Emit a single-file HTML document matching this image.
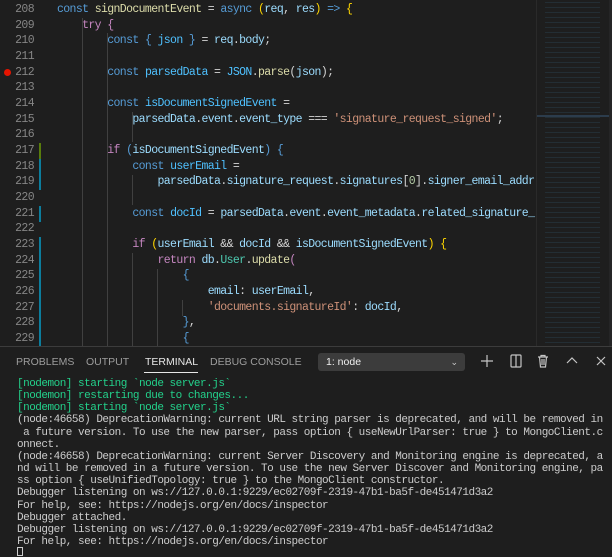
<!DOCTYPE html>
<html><head><style>
body{margin:0;width:612px;height:556px;background:#1e1e1e;overflow:hidden;position:relative;font-family:"Liberation Mono",monospace}
.ln{position:absolute;left:0;width:34px;text-align:right;color:#858585;font-size:11.5px;letter-spacing:-0.6px;line-height:15.67px}
.cd{position:absolute;left:57px;color:#d4d4d4;font-size:11.5px;letter-spacing:-0.62px;line-height:15.67px;white-space:pre;width:479px;overflow:hidden}
.k{color:#569cd6}.c{color:#4fc1ff}.v{color:#9cdcfe}.f{color:#dcdcaa}.p{color:#c586c0}.s{color:#ce9178}.y{color:#ffd700}.t{color:#4ec9b0}
.g{position:absolute;width:1px;background:#404040}
.bar{position:absolute;left:39px;width:2px}
.term{position:absolute;left:17px;top:378px;font-size:11px;letter-spacing:-0.5px;line-height:12.15px;color:#cccccc;white-space:pre}
.gr{color:#23d18b}
.tab{position:absolute;top:356px;font-family:"Liberation Sans",sans-serif;font-size:10.5px;color:#9d9d9d}
</style></head><body>
<div class="g" style="left:82px;top:18px;height:330px"></div>
<div class="g" style="left:107px;top:33px;height:315px"></div>
<div class="g" style="left:132px;top:112px;height:30px"></div>
<div class="g" style="left:132px;top:175px;height:30px"></div>
<div class="g" style="left:132px;top:253px;height:95px"></div>
<div class="g" style="left:157px;top:269px;height:79px"></div>
<div class="g" style="left:182px;top:300px;height:16px"></div>
<div class="bar" style="top:143px;height:16px;background:#587c0c"></div>
<div class="bar" style="top:159px;height:31px;background:#0c7d9d"></div>
<div class="bar" style="top:206px;height:16px;background:#0c7d9d"></div>
<div class="bar" style="top:237px;height:110px;background:#0c7d9d"></div>
<div style="position:absolute;left:4px;top:69px;width:7px;height:7px;border-radius:50%;background:#e51400"></div>
<div style="position:absolute;left:536px;top:0;width:1px;height:347px;background:#2a2a2a"></div>
<div style="position:absolute;left:545px;top:0;width:55px;height:347px;opacity:.35;background:repeating-linear-gradient(#1e1e1e 0 2px,#2d4a5c 2px 3px,#1e1e1e 3px 5px)"></div>
<div style="position:absolute;left:537px;top:115px;width:73px;height:2px;background:#2c3c4c"></div>
<div style="position:absolute;left:609px;top:0;width:3px;height:347px;background:#252526"></div>

<div class="ln" style="top:2px">208</div><div class="cd" style="top:2px"><span class="k">const</span> <span class="f">signDocumentEvent</span> = <span class="k">async</span> <span class="y">(</span><span class="v">req</span>, <span class="v">res</span><span class="y">)</span> <span class="k">=&gt;</span> <span class="y">{</span></div>
<div class="ln" style="top:17.7px">209</div><div class="cd" style="top:17.7px">    <span class="p">try</span> <span class="p">{</span></div>
<div class="ln" style="top:33.3px">210</div><div class="cd" style="top:33.3px">        <span class="k">const</span> <span class="k">{</span> <span class="c">json</span> <span class="k">}</span> = <span class="v">req</span>.<span class="v">body</span>;</div>
<div class="ln" style="top:49px">211</div>
<div class="ln" style="top:64.7px">212</div><div class="cd" style="top:64.7px">        <span class="k">const</span> <span class="c">parsedData</span> = <span class="c">JSON</span>.<span class="f">parse</span>(<span class="v">json</span>);</div>
<div class="ln" style="top:80.3px">213</div>
<div class="ln" style="top:96px">214</div><div class="cd" style="top:96px">        <span class="k">const</span> <span class="c">isDocumentSignedEvent</span> =</div>
<div class="ln" style="top:111.7px">215</div><div class="cd" style="top:111.7px">            <span class="v">parsedData</span>.<span class="v">event</span>.<span class="v">event_type</span> === <span class="s">'signature_request_signed'</span>;</div>
<div class="ln" style="top:127.4px">216</div>
<div class="ln" style="top:143px">217</div><div class="cd" style="top:143px">        <span class="p">if</span> <span class="k">(</span><span class="v">isDocumentSignedEvent</span><span class="k">)</span> <span class="k">{</span></div>
<div class="ln" style="top:158.7px">218</div><div class="cd" style="top:158.7px">            <span class="k">const</span> <span class="c">userEmail</span> =</div>
<div class="ln" style="top:174.4px">219</div><div class="cd" style="top:174.4px">                <span class="v">parsedData</span>.<span class="v">signature_request</span>.<span class="v">signatures</span>[<span style="color:#b5cea8">0</span>].<span class="v">signer_email_addr</span></div>
<div class="ln" style="top:190px">220</div>
<div class="ln" style="top:205.7px">221</div><div class="cd" style="top:205.7px">            <span class="k">const</span> <span class="c">docId</span> = <span class="v">parsedData</span>.<span class="v">event</span>.<span class="v">event_metadata</span>.<span class="v">related_signature_</span></div>
<div class="ln" style="top:221.4px">222</div>
<div class="ln" style="top:237px">223</div><div class="cd" style="top:237px">            <span class="p">if</span> <span class="y">(</span><span class="v">userEmail</span> &amp;&amp; <span class="v">docId</span> &amp;&amp; <span class="v">isDocumentSignedEvent</span><span class="y">)</span> <span class="y">{</span></div>
<div class="ln" style="top:252.7px">224</div><div class="cd" style="top:252.7px">                <span class="p">return</span> <span class="v">db</span>.<span class="t">User</span>.<span class="f">update</span><span class="p">(</span></div>
<div class="ln" style="top:268.4px">225</div><div class="cd" style="top:268.4px">                    <span class="k">{</span></div>
<div class="ln" style="top:284px">226</div><div class="cd" style="top:284px">                        <span class="v">email</span>: <span class="v">userEmail</span>,</div>
<div class="ln" style="top:299.7px">227</div><div class="cd" style="top:299.7px">                        <span class="s">'documents.signatureId'</span>: <span class="v">docId</span>,</div>
<div class="ln" style="top:315.4px">228</div><div class="cd" style="top:315.4px">                    <span class="k">}</span>,</div>
<div class="ln" style="top:331px">229</div><div class="cd" style="top:331px">                    <span class="k">{</span></div>

<div style="position:absolute;left:0;top:346px;width:612px;height:210px;background:#1e1e1e;border-top:1px solid #3c3c3c"></div>
<div class="tab" style="left:16px">PROBLEMS</div>
<div class="tab" style="left:86px">OUTPUT</div>
<div class="tab" style="left:145px;color:#e7e7e7">TERMINAL</div>
<div style="position:absolute;left:144px;top:372px;width:54px;height:1px;background:#e7e7e7"></div>
<div class="tab" style="left:210px">DEBUG CONSOLE</div>
<div style="position:absolute;left:318px;top:353px;width:147px;height:18px;background:#3c3c3c;border-radius:3px;font-family:'Liberation Sans',sans-serif;font-size:10.5px;color:#f0f0f0;line-height:18px;text-indent:8px">1: node<span style="position:absolute;right:7px;top:0;color:#ccc;font-size:9px">&#8964;</span></div>
<svg style="position:absolute;left:478px;top:353px" width="130" height="16" fill="none" stroke="#c5c5c5" stroke-width="1.2">
<path d="M9 2v12M3 8h12"/>
<rect x="33" y="2" width="10" height="12" rx="1"/><path d="M38 2v12"/>
<path d="M60 4h10M63 4V2.5h4V4M61.5 4l1 10h5l1-10M64 6v6M66 6v6"/>
<path d="M89 10l5-5 5 5"/>
<path d="M119 4l8 8M127 4l-8 8"/>
</svg>
<div class="term"><span class="gr">[nodemon] starting `node server.js`
[nodemon] restarting due to changes...
[nodemon] starting `node server.js`</span>
(node:46658) DeprecationWarning: current URL string parser is deprecated, and will be removed in
 a future version. To use the new parser, pass option { useNewUrlParser: true } to MongoClient.c
onnect.
(node:46658) DeprecationWarning: current Server Discovery and Monitoring engine is deprecated, a
nd will be removed in a future version. To use the new Server Discover and Monitoring engine, pa
ss option { useUnifiedTopology: true } to the MongoClient constructor.
Debugger listening on ws://127.0.0.1:9229/ec02709f-2319-47b1-ba5f-de451471d3a2
For help, see: https://nodejs.org/en/docs/inspector
Debugger attached.
Debugger listening on ws://127.0.0.1:9229/ec02709f-2319-47b1-ba5f-de451471d3a2
For help, see: https://nodejs.org/en/docs/inspector
</div>
<div style="position:absolute;left:17px;top:547px;width:6px;height:9px;border:1px solid #ccc;box-sizing:border-box"></div>
</body></html>
